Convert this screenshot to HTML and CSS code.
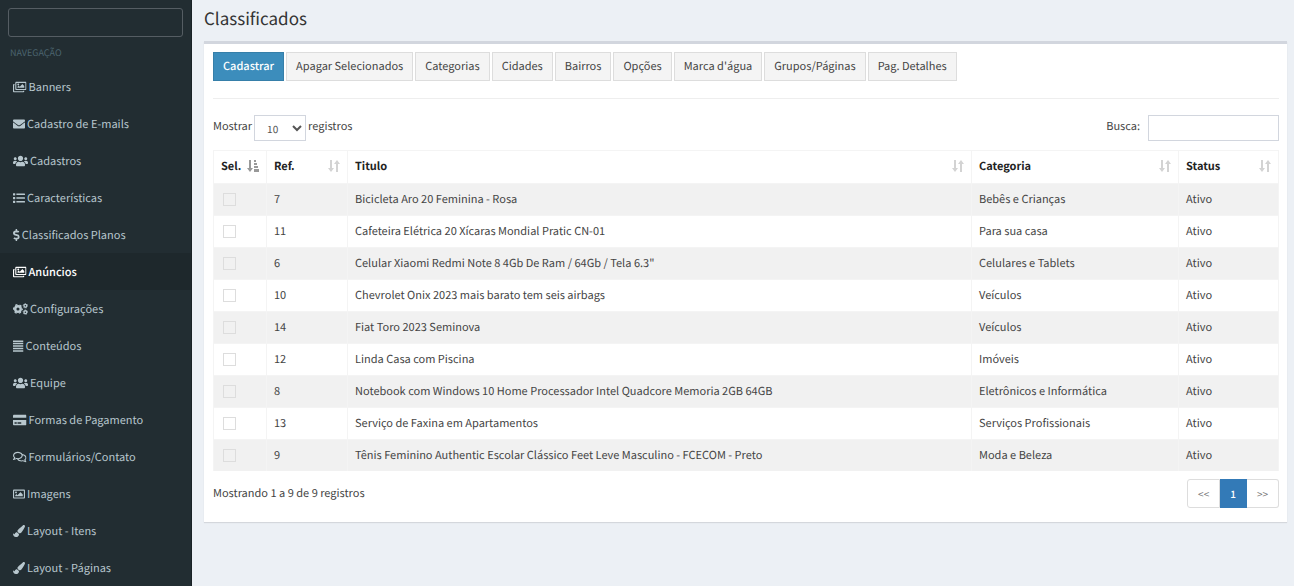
FILE: index.html
```html
<!DOCTYPE html>
<html lang="pt-BR">
<head>
<meta charset="utf-8">
<meta name="viewport" content="width=device-width, initial-scale=1">
<title>Classificados</title>
<link rel="stylesheet" href="styles.css">
</head>
<body>
<svg class="sprite" aria-hidden="true">
  <symbol id="images" viewBox="0 0 576 512"><path d="M480 416v16c0 26.51-21.49 48-48 48H48c-26.51 0-48-21.49-48-48V176c0-26.51 21.49-48 48-48h16v48H54a6 6 0 0 0-6 6v244a6 6 0 0 0 6 6h372a6 6 0 0 0 6-6v-10h48zm42-336H150a6 6 0 0 0-6 6v244a6 6 0 0 0 6 6h372a6 6 0 0 0 6-6V86a6 6 0 0 0-6-6zm6-48c26.51 0 48 21.49 48 48v256c0 26.51-21.49 48-48 48H144c-26.51 0-48-21.49-48-48V80c0-26.51 21.49-48 48-48h384zM264 144c0 22.091-17.909 40-40 40s-40-17.909-40-40 17.909-40 40-40 40 17.909 40 40zm-72 96l39.515-39.515c4.686-4.686 12.284-4.686 16.971 0L288 240l103.515-103.515c4.686-4.686 12.284-4.686 16.971 0L480 208v80H192v-48z"/></symbol>
  <symbol id="envelope" viewBox="0 0 512 512"><path d="M502.3 190.8c3.9-3.1 9.7-.2 9.7 4.7V400c0 26.5-21.5 48-48 48H48c-26.5 0-48-21.5-48-48V195.6c0-5 5.7-7.8 9.7-4.7 22.4 17.4 52.1 39.5 154.1 113.6 21.1 15.4 56.7 47.8 92.2 47.6 35.7.3 72-32.8 92.3-47.6 102-74.1 131.6-96.3 154-113.7zM256 320c23.2.4 56.6-29.2 73.4-41.4 132.7-96.3 142.8-104.7 173.4-128.7 5.8-4.5 9.2-11.5 9.2-18.9v-19c0-26.5-21.5-48-48-48H48c-26.5 0-48 21.5-48 48v19c0 7.4 3.4 14.3 9.2 18.9 30.6 23.9 40.7 32.4 173.4 128.7 16.8 12.2 50.2 41.8 73.4 41.4z"/></symbol>
  <symbol id="users" viewBox="0 0 640 512"><path d="M96 224c35.3 0 64-28.7 64-64s-28.7-64-64-64-64 28.7-64 64 28.7 64 64 64zm448 0c35.3 0 64-28.7 64-64s-28.7-64-64-64-64 28.7-64 64 28.7 64 64 64zm32 32h-64c-17.6 0-33.5 7.1-45.1 18.6 40.3 22.1 68.9 62 75.1 109.4h66c17.7 0 32-14.3 32-32v-32c0-35.3-28.7-64-64-64zm-256 0c61.9 0 112-50.1 112-112S381.9 32 320 32 208 82.1 208 144s50.1 112 112 112zm76.8 32h-8.3c-20.8 10-43.9 16-68.5 16s-47.6-6-68.5-16h-8.3C179.6 288 128 339.6 128 403.2V432c0 26.5 21.5 48 48 48h288c26.5 0 48-21.5 48-48v-28.8c0-63.6-51.6-115.2-115.2-115.2zm-223.7-13.4C161.5 263.1 145.6 256 128 256H64c-35.3 0-64 28.7-64 64v32c0 17.7 14.3 32 32 32h65.9c6.3-47.4 34.9-87.3 75.2-109.4z"/></symbol>
  <symbol id="list" viewBox="0 0 512 512"><path d="M16 48h64a16 16 0 0 1 16 16v64a16 16 0 0 1-16 16H16a16 16 0 0 1-16-16V64a16 16 0 0 1 16-16zm0 160h64a16 16 0 0 1 16 16v64a16 16 0 0 1-16 16H16a16 16 0 0 1-16-16v-64a16 16 0 0 1 16-16zm0 160h64a16 16 0 0 1 16 16v64a16 16 0 0 1-16 16H16a16 16 0 0 1-16-16v-64a16 16 0 0 1 16-16zM144 64h352a16 16 0 0 1 16 16v32a16 16 0 0 1-16 16H144zm0 160h352a16 16 0 0 1 16 16v32a16 16 0 0 1-16 16H144zm0 160h352a16 16 0 0 1 16 16v32a16 16 0 0 1-16 16H144z"/></symbol>
  <symbol id="dollar" viewBox="0 0 288 512"><path d="M209.2 233.4l-108-31.6C88.7 198.2 80 186.5 80 173.5c0-16.3 13.2-29.5 29.5-29.5h66.3c12.2 0 24.2 3.7 34.2 10.5 6.1 4.1 14.3 3.1 19.5-2l34.8-34c7.1-6.9 6.1-18.4-1.8-24.5C238 74.8 207.4 64.1 176 64V16c0-8.8-7.2-16-16-16h-32c-8.8 0-16 7.2-16 16v48h-2.5C45.8 64-5.4 118.7.5 183.6c4.2 46.1 39.4 83.6 83.8 96.6l102.5 30c12.5 3.7 21.2 15.3 21.2 28.3 0 16.3-13.2 29.5-29.5 29.5h-66.3C100 368 88 364.3 78 357.5c-6.1-4.1-14.3-3.1-19.5 2l-34.8 34c-7.1 6.9-6.1 18.4 1.8 24.5 24.5 19.2 55.1 29.9 86.5 30v48c0 8.8 7.2 16 16 16h32c8.8 0 16-7.2 16-16v-48.2c46.6-.9 90.3-28.6 105.7-72.7 21.5-61.6-14.6-124.8-72.5-141.7z"/></symbol>
  <symbol id="cogs" viewBox="0 0 640 512"><g fill="none" stroke="currentColor"><circle cx="212" cy="256" r="118" stroke-width="104"/><circle cx="212" cy="256" r="186" stroke-width="52" stroke-dasharray="97.39 97.39" stroke-dashoffset="48"/><circle cx="528" cy="120" r="62" stroke-width="58"/><circle cx="528" cy="120" r="98" stroke-width="30" stroke-dasharray="51.31 51.31" stroke-dashoffset="26"/><circle cx="528" cy="392" r="62" stroke-width="58"/><circle cx="528" cy="392" r="98" stroke-width="30" stroke-dasharray="51.31 51.31" stroke-dashoffset="26"/></g></symbol>
  <symbol id="justify" viewBox="0 0 448 512"><path d="M0 16h448v64H0zm0 104h448v64H0zm0 104h448v64H0zm0 104h448v64H0zm0 104h448v64H0z"/></symbol>
  <symbol id="card" viewBox="0 0 576 512"><path d="M0 432c0 26.500 21.500 48 48 48h480c26.500 0 48-21.500 48-48V256H0zm192-68c0-6.600 5.400-12 12-12h136c6.600 0 12 5.400 12 12v40c0 6.600-5.400 12-12 12H204c-6.600 0-12-5.400-12-12zm-128 0c0-6.600 5.400-12 12-12h72c6.600 0 12 5.400 12 12v40c0 6.600-5.400 12-12 12H76c-6.600 0-12-5.400-12-12zM576 80v80H0V80c0-26.500 21.500-48 48-48h480c26.500 0 48 21.500 48 48z"/></symbol>
  <symbol id="comments" viewBox="0 0 576 512"><path d="M532 386.200c27.500-27.100 44-61.100 44-98.200 0-80-76.500-146.100-176.200-157.900C368.300 72.500 294.300 32 208 32 93.100 32 0 103.600 0 192c0 37 16.500 71 44 98.200-15.300 30.700-37.300 54.500-37.700 54.900-6.300 6.700-8.100 16.500-4.400 25 3.600 8.500 12 14 21.200 14 53.500 0 96.700-20.200 125.200-38.800 9.200 2.100 18.700 3.700 28.400 4.900C208.100 407.600 281.800 448 368 448c20.800 0 40.800-2.400 59.800-6.800C456.300 459.700 499.400 480 553 480c9.200 0 17.500-5.500 21.200-14 3.600-8.500 1.900-18.300-4.400-25-.4-.3-22.500-24.100-37.800-54.800zm-392.800-92.300L122.100 305c-14.100 9.100-28.500 16.300-43.100 21.400 2.700-4.700 5.400-9.700 8-14.800l15.500-31.100L77.700 256C64.200 242.600 48 220.700 48 192c0-60.700 73.300-112 160-112s160 51.300 160 112-73.300 112-160 112c-16.500 0-33-1.900-49-5.600l-19.800-4.500zM498.300 352l-24.700 24.400 15.500 31.100c2.600 5.100 5.300 10.100 8 14.800-14.600-5.100-29-12.300-43.100-21.400l-17.100-11.100-19.900 4.600c-16 3.700-32.500 5.600-49 5.600-54 0-102.200-20.100-131.300-49.700C338 339.500 416 272.900 416 192c0-3.400-.4-6.700-.7-10C479.700 196.500 528 238.800 528 288c0 28.700-16.200 50.600-29.700 64z"/></symbol>
  <symbol id="image" viewBox="0 0 512 512"><path d="M464 64H48C21.490 64 0 85.490 0 112v288c0 26.510 21.490 48 48 48h416c26.510 0 48-21.490 48-48V112c0-26.510-21.490-48-48-48zm-6 336H54a6 6 0 0 1-6-6V118a6 6 0 0 1 6-6h404a6 6 0 0 1 6 6v276a6 6 0 0 1-6 6zM128 152c-22.091 0-40 17.909-40 40s17.909 40 40 40 40-17.909 40-40-17.909-40-40-40zM96 352h320v-80l-87.515-87.515c-4.686-4.686-12.284-4.686-16.971 0L192 304l-39.515-39.515c-4.686-4.686-12.284-4.686-16.971 0L96 304v48z"/></symbol>
  <symbol id="brush" viewBox="0 0 512 512"><path d="M167.020 309.340c-40.120 2.580-76.530 17.860-97.190 72.300-2.350 6.210-8 9.980-14.590 9.980-11.110 0-45.460-27.670-55.250-34.350C0 439.620 37.930 512 128 512c75.860 0 128-43.770 128-120.190 0-3.110-.65-6.080-.97-9.130l-88.010-73.340zM457.890 0c-15.160 0-29.370 6.710-40.210 16.450C213.270 199.050 192 203.340 192 257.090c0 13.700 3.250 26.760 8.730 38.700l63.820 53.180c7.210 1.800 14.640 3.030 22.390 3.030 62.110 0 98.110-45.470 211.160-256.460 7.380-14.350 13.900-29.850 13.900-45.990C512 20.640 486 0 457.890 0z"/></symbol>
  <symbol id="sort" viewBox="0 0 12 12"><path d="M2 0h2v8h2L3 12 0 8h2zM8 12h2V4h2L9 0 6 4h2z"/></symbol>
  <symbol id="sort-asc" viewBox="0 0 12 12"><path d="M2 0h2v8h2L3 12 0 8h2zM7 0h2v2H7zm0 3h3v2H7zm0 3h4v2H7zm0 3h5v3H7z"/></symbol>
</svg>
<div class="layout">
  <aside class="sidebar">
    <form class="sidebar-search"><input class="sidebar-input" type="text" aria-label="Pesquisar no menu"></form>
    <div class="nav-title">NAVEGAÇÃO</div>
    <nav class="nav">
      <a class="nav-link" href="#"><svg class="icon" viewBox="0 0 576 512"><use href="#images"/></svg>Banners</a>
      <a class="nav-link" href="#"><svg class="icon" viewBox="0 0 512 512"><use href="#envelope"/></svg>Cadastro de E-mails</a>
      <a class="nav-link" href="#"><svg class="icon" viewBox="0 0 640 512"><use href="#users"/></svg>Cadastros</a>
      <a class="nav-link" href="#"><svg class="icon" viewBox="0 0 512 512"><use href="#list"/></svg>Características</a>
      <a class="nav-link" href="#"><svg class="icon" viewBox="0 0 288 512"><use href="#dollar"/></svg>Classificados Planos</a>
      <a class="nav-link active" href="#" aria-current="page"><svg class="icon" viewBox="0 0 576 512"><use href="#images"/></svg>Anúncios</a>
      <a class="nav-link" href="#"><svg class="icon" viewBox="0 0 640 512"><use href="#cogs"/></svg>Configurações</a>
      <a class="nav-link" href="#"><svg class="icon" viewBox="0 0 448 512"><use href="#justify"/></svg>Conteúdos</a>
      <a class="nav-link" href="#"><svg class="icon" viewBox="0 0 640 512"><use href="#users"/></svg>Equipe</a>
      <a class="nav-link" href="#"><svg class="icon" viewBox="0 0 576 512"><use href="#card"/></svg>Formas de Pagamento</a>
      <a class="nav-link" href="#"><svg class="icon" viewBox="0 0 576 512"><use href="#comments"/></svg>Formulários/Contato</a>
      <a class="nav-link" href="#"><svg class="icon" viewBox="0 0 512 512"><use href="#image"/></svg>Imagens</a>
      <a class="nav-link" href="#"><svg class="icon" viewBox="0 0 512 512"><use href="#brush"/></svg>Layout - Itens</a>
      <a class="nav-link" href="#"><svg class="icon" viewBox="0 0 512 512"><use href="#brush"/></svg>Layout - Páginas</a>
    </nav>
  </aside>
  <main class="content">
    <h1 class="page-title">Classificados</h1>
    <section class="box">
      <div class="toolbar">
        <button class="btn btn-primary" type="button">Cadastrar</button>
        <button class="btn" type="button">Apagar Selecionados</button>
        <button class="btn" type="button">Categorias</button>
        <button class="btn" type="button">Cidades</button>
        <button class="btn" type="button">Bairros</button>
        <button class="btn" type="button">Opções</button>
        <button class="btn" type="button">Marca d'água</button>
        <button class="btn" type="button">Grupos/Páginas</button>
        <button class="btn" type="button">Pag. Detalhes</button>
      </div>
      <div class="filters">
        <label class="length">Mostrar
          <select class="control length-select"><option>10</option><option>25</option><option>50</option></select>
          registros</label>
        <label class="search">Busca: <input class="control search-input" type="search"></label>
      </div>
      <table class="table">
        <colgroup><col class="col-sel"><col class="col-ref"><col><col class="col-cat"><col class="col-status"></colgroup>
        <thead>
          <tr>
            <th><div class="head">Sel.<svg class="sort sorted" viewBox="0 0 12 12"><use href="#sort-asc"/></svg></div></th>
            <th><div class="head">Ref.<svg class="sort" viewBox="0 0 12 12"><use href="#sort"/></svg></div></th>
            <th><div class="head">Titulo<svg class="sort" viewBox="0 0 12 12"><use href="#sort"/></svg></div></th>
            <th><div class="head">Categoria<svg class="sort" viewBox="0 0 12 12"><use href="#sort"/></svg></div></th>
            <th><div class="head">Status<svg class="sort" viewBox="0 0 12 12"><use href="#sort"/></svg></div></th>
          </tr>
        </thead>
        <tbody>
          <tr><td><input class="check" type="checkbox" aria-label="Selecionar 7"></td><td>7</td><td>Bicicleta Aro 20 Feminina - Rosa</td><td>Bebês e Crianças</td><td>Ativo</td></tr>
          <tr><td><input class="check" type="checkbox" aria-label="Selecionar 11"></td><td>11</td><td>Cafeteira Elétrica 20 Xícaras Mondial Pratic CN-01</td><td>Para sua casa</td><td>Ativo</td></tr>
          <tr><td><input class="check" type="checkbox" aria-label="Selecionar 6"></td><td>6</td><td>Celular Xiaomi Redmi Note 8 4Gb De Ram / 64Gb / Tela 6.3"</td><td>Celulares e Tablets</td><td>Ativo</td></tr>
          <tr><td><input class="check" type="checkbox" aria-label="Selecionar 10"></td><td>10</td><td>Chevrolet Onix 2023 mais barato tem seis airbags</td><td>Veículos</td><td>Ativo</td></tr>
          <tr><td><input class="check" type="checkbox" aria-label="Selecionar 14"></td><td>14</td><td>Fiat Toro 2023 Seminova</td><td>Veículos</td><td>Ativo</td></tr>
          <tr><td><input class="check" type="checkbox" aria-label="Selecionar 12"></td><td>12</td><td>Linda Casa com Piscina</td><td>Imóveis</td><td>Ativo</td></tr>
          <tr><td><input class="check" type="checkbox" aria-label="Selecionar 8"></td><td>8</td><td>Notebook com Windows 10 Home Processador Intel Quadcore Memoria 2GB 64GB</td><td>Eletrônicos e Informática</td><td>Ativo</td></tr>
          <tr><td><input class="check" type="checkbox" aria-label="Selecionar 13"></td><td>13</td><td>Serviço de Faxina em Apartamentos</td><td>Serviços Profissionais</td><td>Ativo</td></tr>
          <tr><td><input class="check" type="checkbox" aria-label="Selecionar 9"></td><td>9</td><td>Tênis Feminino Authentic Escolar Clássico Feet Leve Masculino - FCECOM - Preto</td><td>Moda e Beleza</td><td>Ativo</td></tr>
        </tbody>
      </table>
      <div class="table-footer">
        <span>Mostrando 1 a 9 de 9 registros</span>
        <nav class="pagination" aria-label="Paginação">
          <a class="page" href="#">&lt;&lt;</a>
          <a class="page current" href="#" aria-current="page">1</a>
          <a class="page" href="#">&gt;&gt;</a>
        </nav>
      </div>
    </section>
  </main>
</div>
</body>
</html>
```
FILE: styles.css
```css
* { box-sizing: border-box; }

body {
  margin: 0;
  background: #ecf0f5;
  color: #444;
  font-family: "Noto Sans CJK SC", "Noto Sans", sans-serif;
  font-size: 11px;
  line-height: 16px;
  text-rendering: geometricPrecision;
}

button, input, select { font: inherit; color: inherit; text-rendering: inherit; }

.sprite { display: none; }

.layout {
  display: flex;
  height: 100vh;
  overflow: hidden;
}

.sidebar {
  flex: 0 0 192px;
  background: #222d32;
  border-right: 1px solid #1a2226;
  overflow: hidden;
}

.sidebar-search { padding: 8px 8px 0; }

.sidebar-input {
  display: block;
  width: 100%;
  height: 29px;
  padding: 0 8px;
  background: transparent;
  border: 1px solid #555d63;
  border-radius: 3px;
}

.nav-title {
  padding: 8px 10px 7px;
  color: #4b646f;
  font-size: 9px;
}

.nav-link {
  display: flex;
  align-items: center;
  gap: 2px;
  height: 37px;
  padding: 0 13px;
  color: #b8c7ce;
  text-decoration: none;
  white-space: nowrap;
}

.nav-link.active { background: #1e282c; color: #fff; font-weight: 500; }

.icon { height: 12px; fill: currentColor; }

.content {
  flex: 1;
  min-width: 0;
  padding: 6px 7px 16px 12px;
  overflow: auto;
}

.page-title {
  margin: 0 0 11px;
  color: #333;
  font-size: 17px;
  font-weight: 400;
  line-height: 24px;
}

.box {
  padding: 8px 8px 14px 9px;
  background: #fff;
  border-top: 3px solid #d2d6de;
  box-shadow: 0 1px 1px rgba(0, 0, 0, .1);
}

.toolbar {
  display: flex;
  flex-wrap: wrap;
  gap: 2px;
  padding-bottom: 17px;
  border-bottom: 1px solid #eee;
}

.btn {
  height: 29px;
  padding: 0 9px 2px;
  background: #f4f4f4;
  border: 1px solid #ddd;
}

.btn-primary {
  background: #3c8dbc;
  border-color: #367fa9;
  color: #fff;
  font-weight: 500;
}

.filters {
  display: flex;
  justify-content: space-between;
  padding: 16px 0 9px;
}

.length, .search { display: flex; line-height: 22px; }
.length { gap: 2px; }
.search { gap: 8px; }

.control {
  height: 26px;
  background: #fff;
  border: 1px solid #d2d6de;
  border-radius: 0;
}

.length-select { width: 52px; padding: 0 0 0 8px; color: #555; font-size: 10px; }
.search-input { width: 131px; padding: 0 8px; appearance: none; }

.table {
  width: 100%;
  table-layout: fixed;
  border-collapse: separate;
  border-spacing: 0;
  border: solid #f4f4f4;
  border-width: 1px 0 0 1px;
}

.col-sel { width: 53px; }
.col-ref { width: 81px; }
.col-cat { width: 207px; }
.col-status { width: 100px; }

.table th, .table td {
  height: 32px;
  padding: 0 7px 2px;
  border-right: 1px solid #f4f4f4;
  text-align: left;
}

.table td { border-top: 1px solid #f4f4f4; }
.table th { color: #222; font-weight: 700; }
.table tbody tr:nth-child(odd) { background: #f1f1f1; }

.head {
  display: flex;
  align-items: center;
  justify-content: space-between;
}

.sort { width: 12px; height: 12px; fill: #d3d3d3; }
.sorted { fill: #999; }

.check {
  display: block;
  width: 13px;
  height: 13px;
  margin: 2px 2px 0;
  appearance: none;
  border: 1px solid #ddd;
}

.check:checked { background: #3c8dbc; }

.table-footer {
  display: flex;
  justify-content: space-between;
  padding-top: 8px;
  line-height: 28px;
}

.pagination { display: flex; }

.page {
  height: 29px;
  padding: 0 10px;
  border: 1px solid #ddd;
  border-left-width: 0;
  color: #777;
  font-size: 10px;
  text-decoration: none;
}

.page:first-child { border-left-width: 1px; border-radius: 3px 0 0 3px; }
.page:last-child { border-radius: 0 3px 3px 0; }
.page.current { background: #337ab7; border-color: #337ab7; color: #fff; font-weight: 500; }
```
